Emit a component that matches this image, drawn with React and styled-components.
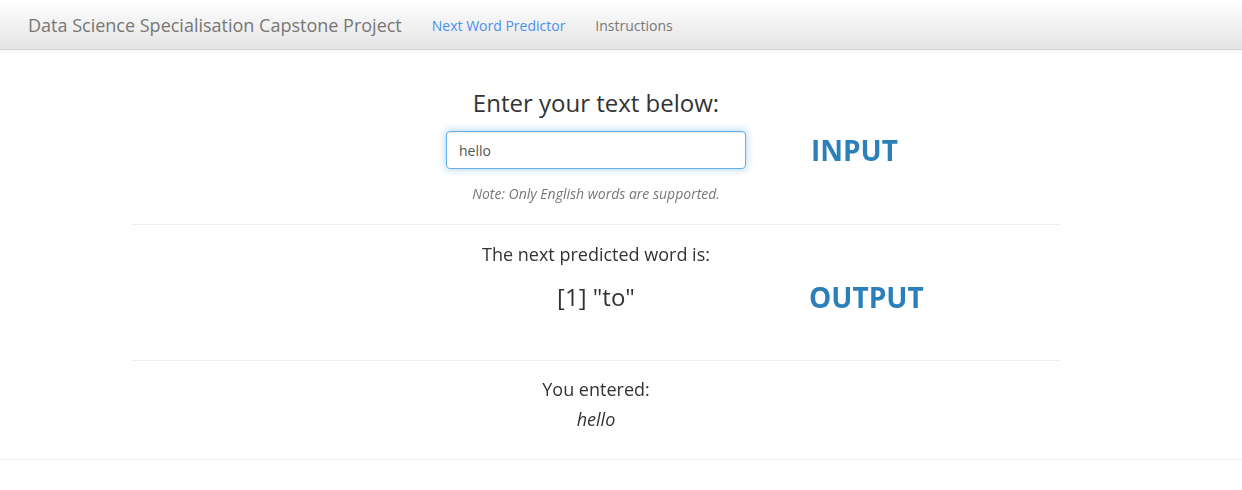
import React, { useState } from 'react'
import styled, { createGlobalStyle } from 'styled-components'

const GlobalStyle = createGlobalStyle`
  * { box-sizing: border-box; }
  body {
    margin: 0;
    background: #fff;
    font-family: "Open Sans", "Liberation Sans", sans-serif;
    color: #333;
  }
`

function App() {
  const [text, setText] = useState('hello')

  return (
    <>
      <GlobalStyle />
      <Navbar>
        <Brand>Data Science Specialisation Capstone Project</Brand>
        <NavLink $active>Next Word Predictor</NavLink>
        <NavLink>Instructions</NavLink>
      </Navbar>
      <Main>
        <Section>
          <Row>
            <Center>
              <Heading>Enter your text below:</Heading>
            </Center>
          </Row>
          <Row>
            <Center>
              <TextInput value={text} onChange={(e) => setText(e.target.value)} autoFocus />
            </Center>
            <Label>INPUT</Label>
          </Row>
          <Row>
            <Center>
              <Note>Note: Only English words are supported.</Note>
            </Center>
          </Row>
        </Section>
        <Rule />
        <Section $bottom="45px">
          <Row>
            <Center>
              <Caption>The next predicted word is:</Caption>
            </Center>
          </Row>
          <Row $align="end">
            <Center>
              <Prediction>[1] "to"</Prediction>
            </Center>
            <Label $output>OUTPUT</Label>
          </Row>
        </Section>
        <Rule />
        <Section $bottom="28px">
          <Row>
            <Center>
              <Caption $top="16px">You entered:</Caption>
              <Echo>{text}</Echo>
            </Center>
          </Row>
        </Section>
      </Main>
      <Footer />
    </>
  )
}

export default App

const Navbar = styled.div`
  height: 50px;
  display: flex;
  align-items: center;
  padding-left: 28px;
  background-image: linear-gradient(to bottom, #fff 0%, #e4e4e4 100%);
  border-bottom: 1px solid #d4d4d4;
  box-shadow: inset 0 1px 0 rgba(255, 255, 255, 0.15), 0 1px 5px rgba(0, 0, 0, 0.075);
`

const Brand = styled.div`
  font-size: 18px;
  color: #777;
  margin-right: 30px;
`

const NavLink = styled.div`
  font-size: 14px;
  color: ${(p) => (p.$active ? '#4a90f0' : '#777')};
  margin-right: 30px;
  padding-top: 2px;
`

const Main = styled.div`
  width: 930px;
  margin-left: 131px;
`

const Section = styled.div`
  display: flex;
  flex-direction: column;
  padding-bottom: ${(p) => p.$bottom || '0'};
`

const Row = styled.div`
  display: grid;
  grid-template-columns: 1fr 300px 1fr;
  align-items: ${(p) => p.$align || 'center'};
`

const Center = styled.div`
  grid-column: 2;
  display: flex;
  flex-direction: column;
  align-items: center;
  white-space: nowrap;
`

const Label = styled.div`
  grid-column: 3;
  padding-left: ${(p) => (p.$output ? '63px' : '65px')};
  font-size: 28px;
  line-height: 35px;
  font-weight: 700;
  color: #2b80bb;
`

const Heading = styled.div`
  font-size: 24px;
  margin-top: 40px;
  margin-bottom: 15px;
  line-height: 1.1;
`

const TextInput = styled.input`
  width: 300px;
  height: 38px;
  padding: 6px 12px;
  font-family: inherit;
  font-size: 14px;
  color: #555;
  border: 1px solid #66afe9;
  border-radius: 4px;
  outline: none;
  box-shadow: inset 0 1px 1px rgba(0, 0, 0, 0.075), 0 0 8px rgba(102, 175, 233, 0.6);
`

const Note = styled.div`
  font-size: 14px;
  font-style: italic;
  color: #777;
  margin-top: 15px;
  margin-bottom: 21px;
`

const Rule = styled.hr`
  margin: 0;
  border: 0;
  border-top: 1px solid #eee;
`

const Caption = styled.div`
  font-size: 18px;
  margin-top: ${(p) => p.$top || '17px'};
`

const Prediction = styled.div`
  font-size: 24px;
  line-height: 36px;
  margin-top: 13px;
`

const Echo = styled.div`
  font-size: 18px;
  font-style: italic;
  margin-top: 6px;
`

const Footer = styled.div`
  border-top: 1px solid #eee;
`
